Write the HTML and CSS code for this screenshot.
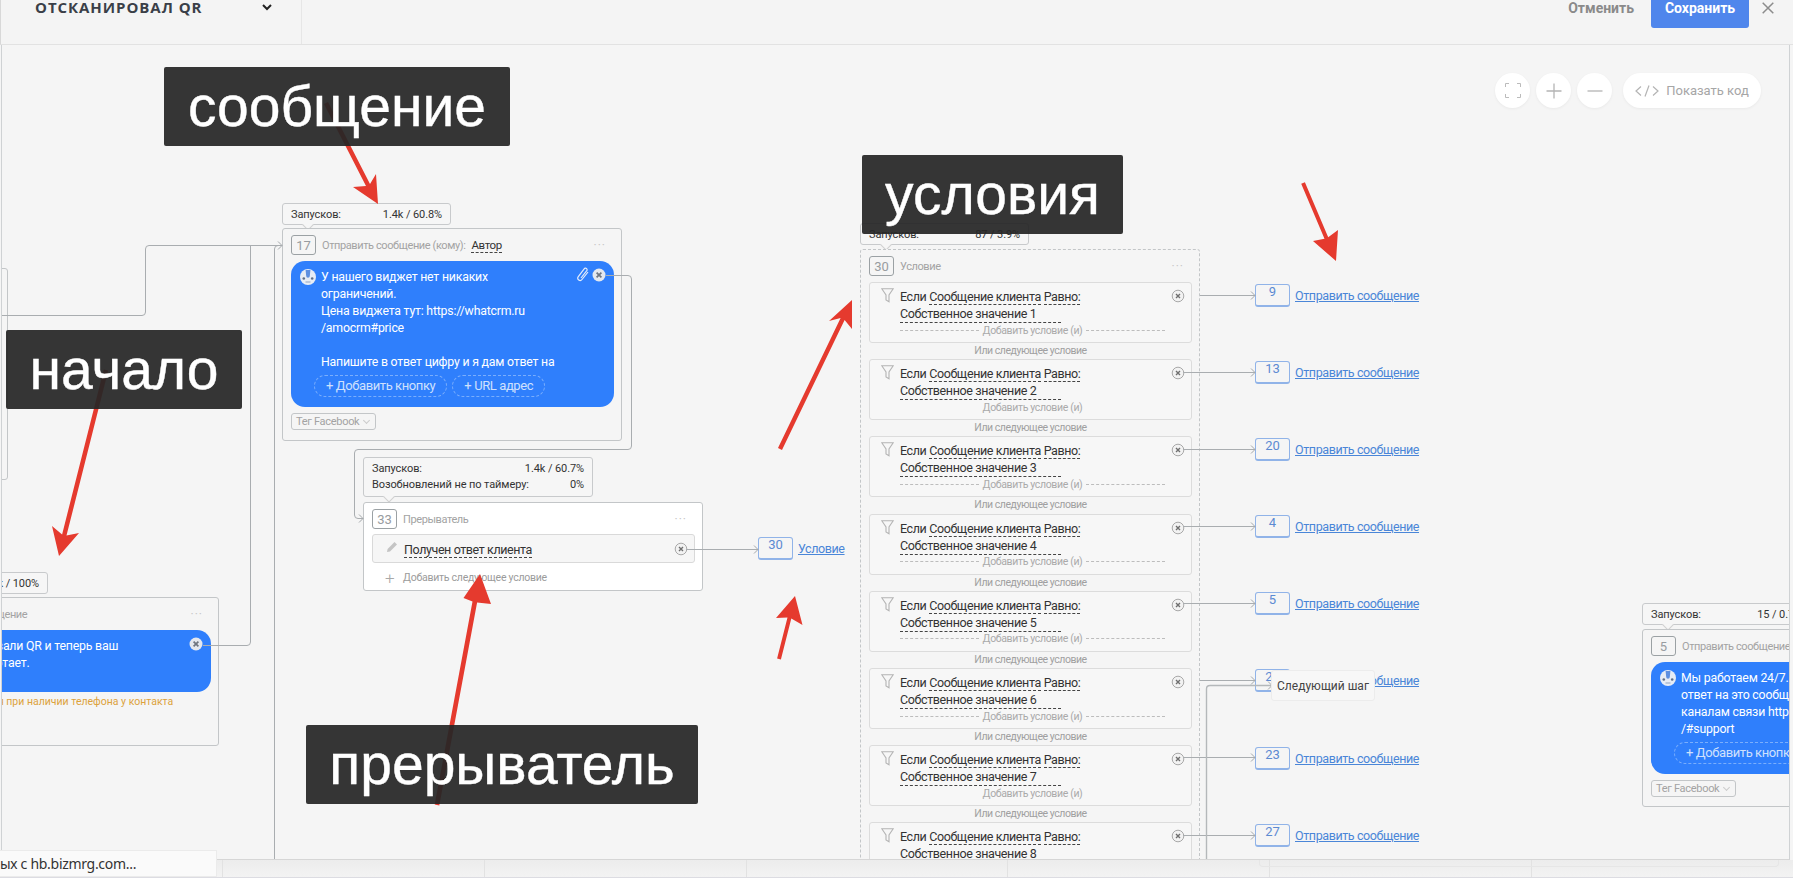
FILE: index.html
```html
<!DOCTYPE html>
<html lang="ru">
<head>
  <meta charset="UTF-8">
  <title>Отсканировал QR</title>
  <link rel="stylesheet" href="styles.css">
</head>
<body>

  <svg class="sprites" width="0" height="0">
    <defs>
      <marker id="tip" markerUnits="userSpaceOnUse" markerWidth="6" markerHeight="10" refX="5" refY="5" orient="auto">
        <path d="M1 1 L5 5 L1 9" fill="none" stroke="#a4a8ab"/>
      </marker>
      <symbol id="ico-avatar" viewBox="0 0 16 16">
        <circle cx="8" cy="8" r="8" fill="#e6ecf5"/>
        <path d="M5.6 1 h4.8 l-.6 6 a1.8 1.8 0 0 1-3.6 0z" fill="#5d8fe0"/>
        <circle cx="3.8" cy="9.5" r="1.3" fill="#5f6f88"/>
        <circle cx="12.2" cy="9.5" r="1.3" fill="#5f6f88"/>
        <path d="M5.5 13 h5" stroke="#9fb0c8" stroke-width="1.2"/>
      </symbol>
      <symbol id="ico-close-w" viewBox="0 0 14 14">
        <circle cx="7" cy="7" r="6.5" fill="#e4e8ee"/>
        <path d="M4.6 4.6 L9.4 9.4 M9.4 4.6 L4.6 9.4" stroke="#6f7680" stroke-width="1.7"/>
      </symbol>
      <symbol id="ico-close" viewBox="0 0 14 14">
        <circle cx="7" cy="7" r="5.8" fill="#f2f2f2" stroke="#a9a9a9"/>
        <path d="M5 5 L9 9 M9 5 L5 9" stroke="#6f6f6f" stroke-width="1.4"/>
      </symbol>
      <symbol id="ico-funnel" viewBox="0 0 13 15">
        <path d="M.8 .8 H12.2 L8 7 V13.8 L5 12 V7 Z" fill="none" stroke="#b4b4b4" stroke-width="1.1"/>
      </symbol>
    </defs>
  </svg>

  <div class="page">
    <header class="topbar">
      <div class="flow-name">
        <span class="flow-title">ОТСКАНИРОВАЛ QR</span>
        <svg class="chevron" width="10" height="7" viewBox="0 0 10 7"><path d="M1 1 L5 5 L9 1" fill="none" stroke="#222" stroke-width="2"/></svg>
      </div>
      <div class="top-actions">
        <a class="btn-cancel">Отменить</a>
        <a class="btn-save">Сохранить</a>
        <svg class="btn-x" width="12" height="12" viewBox="0 0 12 12"><path d="M.7 .7 L11.3 11.3 M11.3 .7 L.7 11.3" stroke="#8c8c8c" stroke-width="1.5"/></svg>
      </div>
    </header>

    <main class="canvas">
      <!-- соединения, координаты как на странице -->
      <svg class="wires" width="1787" height="815" viewBox="2 45 1787 815">
        <g fill="none" stroke="#a9adb0">
          <path d="M2 315.5 H142 Q145.5 315.5 145.5 312 V249 Q145.5 245.5 149 245.5 H282" marker-end="url(#tip)"/>
          <path d="M203 645.5 H247 Q250.5 645.5 250.5 642 V245.5"/>
          <path d="M274.5 860 V249 Q274.5 245.5 278 245.5 H282"/>
          <path d="M606 275.5 H628 Q631.5 275.5 631.5 279 V446 Q631.5 449.5 628 449.5 H358 Q354.5 449.5 354.5 453 V515 Q354.5 518.5 358 518.5 H363" marker-end="url(#tip)"/>
          <path d="M686 549.5 H758" marker-end="url(#tip)"/>
          <path d="M1200 295.5 H1255" marker-end="url(#tip)"/>
          <path d="M1183 372.5 H1255" marker-end="url(#tip)"/>
          <path d="M1183 449.5 H1255" marker-end="url(#tip)"/>
          <path d="M1183 526.5 H1255" marker-end="url(#tip)"/>
          <path d="M1183 603.5 H1255" marker-end="url(#tip)"/>
          <path d="M1200 680.5 H1255" marker-end="url(#tip)"/>
          <path d="M1183 757.5 H1255" marker-end="url(#tip)"/>
          <path d="M1183 835.5 H1255" marker-end="url(#tip)"/>
          <path d="M1206.5 860 V689 Q1206.5 685.5 1210 685.5 H1272" stroke="#b4b8ba" stroke-width="1.4" marker-end="url(#tip)"/>
        </g>
      </svg>

      <div class="node-edge"></div>

      <!-- начало -->
      <div class="stats stats-start"><div class="stat-row"><span>Запусков:</span><span>2.3k / 100%</span></div></div>
      <section class="node node-start">
        <div class="node-head">
          <span class="node-id">1</span>
          <span class="node-title">Отправить сообщение</span>
          <span class="dots">···</span>
        </div>
        <div class="bubble bubble-short">
          <svg class="avatar"><use href="#ico-avatar"/></svg>
          <div class="bubble-text">Вы отсканировали QR и теперь ваш<br>WhatsApp работает.</div>
          <svg class="bubble-close"><use href="#ico-close-w"/></svg>
        </div>
        <div class="warn">Сообщение отправится при наличии телефона у контакта</div>
      </section>

      <!-- сообщение -->
      <div class="stats stats-msg"><div class="stat-row"><span>Запусков:</span><span>1.4k / 60.8%</span></div></div>
      <section class="node node-msg">
        <div class="node-head">
          <span class="node-id">17</span>
          <span class="node-title">Отправить сообщение (кому):</span>
          <span class="dash who">Автор</span>
          <span class="dots">···</span>
        </div>
        <div class="bubble">
          <svg class="avatar"><use href="#ico-avatar"/></svg>
          <div class="bubble-text">У нашего виджет нет никаких<br>ограничений.<br>Цена виджета тут: https://whatcrm.ru<br>/amocrm#price<br><br>Напишите в ответ цифру и я дам ответ на</div>
          <div class="bubble-btns">
            <span class="add-btn">+ Добавить кнопку</span>
            <span class="add-btn">+ URL адрес</span>
          </div>
          <svg class="bubble-clip" width="13" height="15" viewBox="0 0 13 15"><path d="M12 5 L6 12.5 a2.3 2.3 0 0 1-3.7-2.8 L8.2 1.8 a1.6 1.6 0 0 1 2.6 1.9 L5 11" fill="none" stroke="#e4ecfb" stroke-width="1.2"/></svg>
          <svg class="bubble-close"><use href="#ico-close-w"/></svg>
        </div>
        <div class="tag">Тег Facebook <i class="tag-arrow"></i></div>
      </section>

      <!-- прерыватель -->
      <div class="stats stats-break">
        <div class="stat-row"><span>Запусков:</span><span>1.4k / 60.7%</span></div>
        <div class="stat-row"><span>Возобновлений не по таймеру:</span><span>0%</span></div>
      </div>
      <section class="node node-break">
        <div class="node-head">
          <span class="node-id">33</span>
          <span class="node-title">Прерыватель</span>
          <span class="dots">···</span>
        </div>
        <div class="break-row">
          <svg class="pencil" width="12" height="12" viewBox="0 0 12 12"><path d="M1 11 L1.6 8 L8.5 1 L11 3.5 L4 10.4 Z" fill="#c4c4c4"/></svg>
          <span class="dash break-text">Получен ответ клиента</span>
          <svg class="break-close"><use href="#ico-close"/></svg>
        </div>
        <div class="break-add"><span class="break-plus">+</span>Добавить следующее условие</div>
      </section>

      <div class="branch branch-break">
        <span class="target">30</span><a class="step-link">Условие</a>
      </div>

      <!-- условия -->
      <div class="stats stats-cond"><div class="stat-row"><span>Запусков:</span><span>87 / 3.9%</span></div></div>
      <section class="node node-cond">
        <div class="node-head">
          <span class="node-id">30</span>
          <span class="node-title">Условие</span>
          <span class="dots">···</span>
        </div>

        <div class="cond">
          <svg class="funnel"><use href="#ico-funnel"/></svg>
          <div class="cond-body">
            <div class="cond-text">Если <span class="dash">Сообщение клиента</span> <span class="dash">Равно:</span><br><span class="dash value">Собственное значение 1</span></div>
            <div class="cond-add"><span>Добавить условие (и)</span></div>
          </div>
          <svg class="cond-close"><use href="#ico-close"/></svg>
        </div>
        <div class="cond-or">Или следующее условие</div>

        <div class="cond">
          <svg class="funnel"><use href="#ico-funnel"/></svg>
          <div class="cond-body">
            <div class="cond-text">Если <span class="dash">Сообщение клиента</span> <span class="dash">Равно:</span><br><span class="dash value">Собственное значение 2</span></div>
            <div class="cond-add no-lines"><span>Добавить условие (и)</span></div>
          </div>
          <svg class="cond-close"><use href="#ico-close"/></svg>
        </div>
        <div class="cond-or">Или следующее условие</div>

        <div class="cond">
          <svg class="funnel"><use href="#ico-funnel"/></svg>
          <div class="cond-body">
            <div class="cond-text">Если <span class="dash">Сообщение клиента</span> <span class="dash">Равно:</span><br><span class="dash value">Собственное значение 3</span></div>
            <div class="cond-add"><span>Добавить условие (и)</span></div>
          </div>
          <svg class="cond-close"><use href="#ico-close"/></svg>
        </div>
        <div class="cond-or">Или следующее условие</div>

        <div class="cond">
          <svg class="funnel"><use href="#ico-funnel"/></svg>
          <div class="cond-body">
            <div class="cond-text">Если <span class="dash">Сообщение клиента</span> <span class="dash">Равно:</span><br><span class="dash value">Собственное значение 4</span></div>
            <div class="cond-add"><span>Добавить условие (и)</span></div>
          </div>
          <svg class="cond-close"><use href="#ico-close"/></svg>
        </div>
        <div class="cond-or">Или следующее условие</div>

        <div class="cond">
          <svg class="funnel"><use href="#ico-funnel"/></svg>
          <div class="cond-body">
            <div class="cond-text">Если <span class="dash">Сообщение клиента</span> <span class="dash">Равно:</span><br><span class="dash value">Собственное значение 5</span></div>
            <div class="cond-add"><span>Добавить условие (и)</span></div>
          </div>
          <svg class="cond-close"><use href="#ico-close"/></svg>
        </div>
        <div class="cond-or">Или следующее условие</div>

        <div class="cond">
          <svg class="funnel"><use href="#ico-funnel"/></svg>
          <div class="cond-body">
            <div class="cond-text">Если <span class="dash">Сообщение клиента</span> <span class="dash">Равно:</span><br><span class="dash value">Собственное значение 6</span></div>
            <div class="cond-add"><span>Добавить условие (и)</span></div>
          </div>
          <svg class="cond-close"><use href="#ico-close"/></svg>
        </div>
        <div class="cond-or">Или следующее условие</div>

        <div class="cond">
          <svg class="funnel"><use href="#ico-funnel"/></svg>
          <div class="cond-body">
            <div class="cond-text">Если <span class="dash">Сообщение клиента</span> <span class="dash">Равно:</span><br><span class="dash value">Собственное значение 7</span></div>
            <div class="cond-add no-lines"><span>Добавить условие (и)</span></div>
          </div>
          <svg class="cond-close"><use href="#ico-close"/></svg>
        </div>
        <div class="cond-or">Или следующее условие</div>

        <div class="cond">
          <svg class="funnel"><use href="#ico-funnel"/></svg>
          <div class="cond-body">
            <div class="cond-text">Если <span class="dash">Сообщение клиента</span> <span class="dash">Равно:</span><br><span class="dash value">Собственное значение 8</span></div>
            <div class="cond-add"><span>Добавить условие (и)</span></div>
          </div>
          <svg class="cond-close"><use href="#ico-close"/></svg>
        </div>
      </section>

      <div class="branches">
        <div class="branch"><span class="target">9</span><a class="step-link">Отправить сообщение</a></div>
        <div class="branch"><span class="target">13</span><a class="step-link">Отправить сообщение</a></div>
        <div class="branch"><span class="target">20</span><a class="step-link">Отправить сообщение</a></div>
        <div class="branch"><span class="target">4</span><a class="step-link">Отправить сообщение</a></div>
        <div class="branch"><span class="target">5</span><a class="step-link">Отправить сообщение</a></div>
        <div class="branch"><span class="target">21</span><a class="step-link">Отправить сообщение</a></div>
        <div class="branch"><span class="target">23</span><a class="step-link">Отправить сообщение</a></div>
        <div class="branch"><span class="target">27</span><a class="step-link">Отправить сообщение</a></div>
      </div>
      <div class="tooltip">Следующий шаг</div>

      <!-- справа, обрезается краем -->
      <div class="stats stats-right"><div class="stat-row"><span>Запусков:</span><span>15 / 0.7%</span></div></div>
      <section class="node node-right">
        <div class="node-head">
          <span class="node-id">5</span>
          <span class="node-title">Отправить сообщение (кому):</span>
        </div>
        <div class="bubble">
          <svg class="avatar"><use href="#ico-avatar"/></svg>
          <div class="bubble-text">Мы работаем 24/7. Дадим<br>ответ на это сообщение по всем<br>каналам связи https://whatcrm.ru<br>/#support</div>
          <div class="bubble-btns">
            <span class="add-btn">+ Добавить кнопку</span>
          </div>
        </div>
        <div class="tag">Тег Facebook <i class="tag-arrow"></i></div>
      </section>

      <!-- красные стрелки поверх схемы -->
      <svg class="arrows" width="1787" height="815" viewBox="2 45 1787 815">
        <g fill="#e53a2e">
          <path d="M324 104 L328 102 L370 184 L376 174 L378 204 L353 187 L366 186 Z"/>
          <path d="M108.2 370.6 L66.5 535.6 L79 533 L59 556 L52 526 L62.1 534.4 L103.8 369.4 Z"/>
          <path d="M439.3 805.4 L477.1 602.4 L491 604 L480 574 L463.5 598 L472.5 601.6 L434.7 804.6 Z"/>
          <path d="M780.9 659.5 L791.3 618.5 L802.5 625 L795 596 L776 618 L787.5 617.5 L777.1 658.5 Z"/>
          <path d="M782 450 L844.6 320 L852 329 L852 300 L829 321 L840.6 318 L778 448 Z"/>
          <path d="M1304.9 182.2 L1328.2 237.2 L1338 230 L1336 261 L1313 241 L1324.5 238.8 L1301.2 183.8 Z"/>
        </g>
      </svg>

      <!-- подписи -->
      <div class="caption cap-msg">сообщение</div>
      <div class="caption cap-start">начало</div>
      <div class="caption cap-cond">условия</div>
      <div class="caption cap-break">прерыватель</div>

      <!-- управление масштабом -->
      <div class="zoom-tools">
        <a class="round-btn">
          <svg width="16" height="15" viewBox="0 0 16 15"><path d="M.5 4 V.5 H4 M12 .5 H15.5 V4 M15.5 11 V14.5 H12 M4 14.5 H.5 V11" fill="none" stroke="#bbb"/></svg>
        </a>
        <a class="round-btn">
          <svg width="16" height="16" viewBox="0 0 16 16"><path d="M8 .5 V15.5 M.5 8 H15.5" stroke="#b4b4b4" stroke-width="1.3"/></svg>
        </a>
        <a class="round-btn">
          <svg width="16" height="2" viewBox="0 0 16 2"><path d="M.5 1 H15.5" stroke="#b4b4b4" stroke-width="1.3"/></svg>
        </a>
        <a class="code-btn">
          <svg width="24" height="12" viewBox="0 0 24 12"><path d="M6 1.5 L1 6 L6 10.5 M18 1.5 L23 6 L18 10.5 M14 .5 L10 11.5" fill="none" stroke="#b4b4b4" stroke-width="1.2"/></svg>
          Показать код
        </a>
      </div>
    </main>

    <footer class="bottombar">
      <span class="bar-cell cell-a"></span>
      <span class="bar-cell"></span>
      <span class="bar-cell"></span>
      <span class="bar-cell"></span>
      <span class="bar-cell"></span>
      <span class="bar-cell"></span>
      <div class="status-pop">ых с hb.bizmrg.com...</div>
    </footer>
  </div>

</body>
</html>
```

FILE: styles.css
```css
* {
  box-sizing: border-box;
}

body {
  margin: 0;
  background: #f5f5f5;
  font-family: Roboto, 'Noto Sans', sans-serif;
  color: #333;
}

a {
  cursor: pointer;
}

.sprites {
  position: absolute;
}

.page {
  width: 1793px;
  height: 878px;
  display: flex;
  flex-direction: column;
  overflow: hidden;
}

/* верхняя панель */

.topbar {
  height: 45px;
  flex: none;
  display: flex;
  justify-content: space-between;
  border-bottom: 1px solid #e2e2e2;
  border-left: 1px solid #d8d8d8;
  background: #f4f4f4;
}

.flow-name {
  width: 301px;
  height: 44px;
  padding: 0 29px 0 34px;
  display: flex;
  justify-content: space-between;
  border-right: 1px solid #e6e6e6;
}

.flow-title {
  font-family: 'Open Sans', sans-serif;
  font-size: 15px;
  font-weight: 700;
  line-height: 15px;
  letter-spacing: 0.95px;
  color: #3a3f48;
}

.chevron {
  margin-top: 4px;
}

.top-actions {
  display: flex;
  align-items: flex-start;
  padding-right: 19px;
}

.btn-cancel {
  font-size: 14px;
  font-weight: 700;
  line-height: 17px;
  color: #8a8a8a;
}

.btn-save {
  width: 98px;
  height: 28px;
  margin-left: 17px;
  background: #4f86ec;
  border-radius: 0 0 3px 3px;
  color: white;
  font-size: 14px;
  font-weight: 700;
  line-height: 17px;
  text-align: center;
}

.btn-x {
  margin: 2px 0 0 13px;
}

/* холст */

.canvas {
  position: relative;
  flex: 1;
  margin-left: 1px;
  margin-right: 3px;
  border-left: 1px solid #cfd2d4;
  border-right: 1px solid #cfd2d4;
  border-bottom: 1px solid #d6d6d6;
  overflow: hidden;
  background: #f5f5f5;
  font-size: 13px;
}

.wires,
.arrows {
  position: absolute;
  left: 0;
  top: 0;
  pointer-events: none;
}

.wires {
  z-index: 2;
}

.arrows {
  z-index: 3;
}

.node-edge {
  position: absolute;
  left: -20px;
  top: 223px;
  width: 26px;
  height: 212px;
  border: 1px solid #c3c6c8;
  border-radius: 3px;
}

/* узлы */

.node {
  position: absolute;
  width: 340px;
  padding: 6px 7px 10px 8px;
  border: 1px solid #c3c6c8;
  border-radius: 3px;
  background: #f5f5f5;
  z-index: 1;
}

.node-start { left: -123px; top: 552px; height: 149px; }
.node-msg { left: 280px; top: 183px; height: 213px; }
.node-break { left: 361px; top: 457px; height: 89px; background: white; }
.node-cond { left: 858px; top: 204px; height: 640px; border: 1px dashed #c3c6c8; }
.node-right { left: 1640px; top: 584px; height: 178px; }

.node-head {
  display: flex;
  align-items: center;
  height: 20px;
}

.node-id {
  width: 25px;
  height: 20px;
  flex: none;
  border: 1px solid #9ba1a4;
  border-radius: 3px;
  color: #989ca0;
  line-height: 19px;
  text-align: center;
}

.node-title {
  margin-left: 6px;
  font-size: 11px;
  letter-spacing: -0.4px;
  color: #a3a3a3;
  white-space: nowrap;
}

.who {
  margin-left: 6px;
  font-size: 11.5px;
  letter-spacing: -0.4px;
}

.dots {
  margin-left: auto;
  padding-right: 8px;
  font-size: 12px;
  letter-spacing: 1px;
  color: #c8c8c8;
}

.dash {
  border-bottom: 1px dashed #444;
}

/* счётчики */

.stats {
  position: absolute;
  padding: 3px 8px 2px;
  width: 169px;
  border: 1px solid #c8cacc;
  border-radius: 3px;
  background: #f6f6f6;
  font-size: 11px;
  letter-spacing: -0.1px;
  line-height: 15px;
  color: #333;
  z-index: 1;
}

.stats::after {
  content: "";
  position: absolute;
  left: 21px;
  bottom: -5px;
  width: 7px;
  height: 7px;
  border-right: 1px solid #d0d0d0;
  border-bottom: 1px solid #d0d0d0;
  background: #f6f6f6;
  transform: rotate(45deg);
}

.stat-row {
  display: flex;
  justify-content: space-between;
  white-space: nowrap;
}

.stats-start { left: -123px; top: 527px; }
.stats-msg { left: 280px; top: 158px; }
.stats-break { left: 361px; top: 412px; width: 230px; height: 40px; padding-top: 3px; line-height: 16px; }
.stats-cond { left: 858px; top: 178px; }
.stats-right { left: 1640px; top: 558px; }

/* сообщение */

.bubble {
  position: relative;
  margin-top: 6px;
  padding: 8px 8px 10px 30px;
  background: #2f7ffc;
  border-radius: 14px;
  color: white;
  font-size: 12.3px;
  letter-spacing: -0.2px;
  line-height: 17px;
  white-space: nowrap;
}

.bubble-short {
  height: 62px;
}

.avatar {
  position: absolute;
  left: 9px;
  top: 8px;
  width: 16px;
  height: 16px;
}

.bubble-close {
  position: absolute;
  right: 8px;
  top: 7px;
  width: 14px;
  height: 14px;
}

.bubble-clip {
  position: absolute;
  right: 25px;
  top: 6px;
}

.bubble-btns {
  display: flex;
  gap: 5px;
  margin: 4px 0 0 -7px;
}

.add-btn {
  height: 22px;
  padding: 0 11px;
  border: 1px dashed #7aaefc;
  border-radius: 11px;
  color: #cfe1fd;
  font-size: 13px;
  letter-spacing: -0.4px;
  line-height: 20px;
}

.tag {
  display: flex;
  align-items: center;
  justify-content: space-between;
  width: 85px;
  height: 17px;
  margin-top: 6px;
  padding: 0 6px 0 4px;
  border: 1px solid #c3c6c8;
  border-radius: 3px;
  font-size: 11px;
  letter-spacing: -0.3px;
  color: #a3a3a3;
  white-space: nowrap;
}

.tag-arrow {
  width: 5px;
  height: 5px;
  margin-top: -3px;
  border-right: 1px solid #ccc;
  border-bottom: 1px solid #ccc;
  transform: rotate(45deg);
}

.warn {
  margin-top: 3px;
  font-size: 10.5px;
  line-height: 14px;
  color: #dca23c;
  white-space: nowrap;
}

/* прерыватель */

.break-row {
  display: flex;
  align-items: center;
  height: 29px;
  margin-top: 5px;
  padding: 0 6px 0 13px;
  border: 1px solid #d9d9d9;
  border-radius: 3px;
  background: #f6f6f6;
  font-size: 12.5px;
  letter-spacing: -0.4px;
}

.pencil {
  margin-right: 6px;
  margin-top: -3px;
}

.break-text {
  margin-top: 2px;
}

.break-close {
  width: 14px;
  height: 14px;
  margin-left: auto;
}

.break-add {
  display: flex;
  align-items: center;
  height: 29px;
  padding-left: 13px;
  font-size: 10.5px;
  letter-spacing: -0.25px;
  color: #9b9b9b;
}

.break-plus {
  width: 18px;
  font-size: 17px;
  font-weight: 300;
  color: #a8a8a8;
}

/* условия */

.cond {
  display: flex;
  height: 61px;
  margin-top: 6px;
  padding: 5px 5px 0 11px;
  border: 1px solid #dcdcdc;
  border-radius: 3px;
  background: #f7f7f7;
}

.funnel {
  width: 13px;
  height: 15px;
  flex: none;
  margin: 0 6px 0 0;
}

.cond-body {
  width: 265px;
}

.cond-text {
  font-size: 12.5px;
  letter-spacing: -0.38px;
  line-height: 17px;
  white-space: nowrap;
}

.value {
  display: inline-block;
  width: 161px;
  line-height: 16px;
}

.cond-add {
  display: flex;
  align-items: center;
  gap: 4px;
  height: 14px;
  font-size: 10.5px;
  letter-spacing: -0.35px;
  color: #aaa;
  white-space: nowrap;
}

.cond-add::before,
.cond-add::after {
  content: "";
  flex: 1;
  border-top: 1px dashed #bdbdbd;
}

.cond-add.no-lines::before,
.cond-add.no-lines::after {
  border-top: none;
}

.cond-close {
  width: 14px;
  height: 14px;
  margin: 1px 0 0 6px;
}

.cond-or {
  height: 16px;
  margin-bottom: -5.8px;
  font-size: 10.5px;
  letter-spacing: -0.45px;
  line-height: 15px;
  color: #a0a0a0;
  text-align: center;
}

/* переходы */

.branches {
  position: absolute;
  left: 1253px;
  top: 239px;
  display: flex;
  flex-direction: column;
  gap: 55.2px;
}

.branch {
  display: flex;
  align-items: center;
  gap: 5px;
  height: 22px;
}

.branch-break {
  position: absolute;
  left: 756px;
  top: 492px;
}

.target {
  width: 35px;
  height: 23px;
  border: 1px solid #90b3e8;
  border-bottom-width: 2px;
  border-radius: 3px;
  color: #5c8ad2;
  line-height: 14px;
  text-align: center;
  background: #f5f5f5;
  position: relative;
}

.step-link {
  color: #4a86d8;
  font-size: 12.5px;
  letter-spacing: -0.4px;
  text-decoration: underline;
  white-space: nowrap;
}

.tooltip {
  position: absolute;
  left: 1269px;
  top: 625px;
  width: 104px;
  height: 31px;
  border: 1px solid #ececec;
  border-radius: 3px;
  background: #f7f7f7;
  color: #444;
  font-size: 12px;
  line-height: 30px;
  text-align: center;
  white-space: nowrap;
  z-index: 2;
}

/* чёрные подписи */

.caption {
  position: absolute;
  height: 79px;
  border-radius: 2px;
  background: rgba(38, 38, 38, 0.93);
  color: white;
  font-family: 'Liberation Sans', Arial, sans-serif;
  font-size: 57px;
  -webkit-text-stroke: 0.4px white;
  line-height: 79px;
  text-align: center;
  z-index: 4;
}

.cap-msg { left: 162px; top: 22px; width: 346px; }
.cap-start { left: 4px; top: 285px; width: 236px; }
.cap-cond { left: 860px; top: 110px; width: 261px; }
.cap-break { left: 304px; top: 680px; width: 392px; }

/* кнопки масштаба */

.zoom-tools {
  position: absolute;
  left: 1493px;
  top: 28px;
  display: flex;
  align-items: center;
  gap: 6px;
}

.round-btn {
  width: 35px;
  height: 35px;
  display: flex;
  align-items: center;
  justify-content: center;
  border-radius: 50%;
  background: white;
  box-shadow: 0 1px 3px rgba(0, 0, 0, 0.05);
}

.code-btn {
  width: 138px;
  height: 35px;
  margin-left: 5px;
  display: flex;
  align-items: center;
  justify-content: center;
  gap: 7px;
  border-radius: 18px;
  background: white;
  box-shadow: 0 1px 3px rgba(0, 0, 0, 0.05);
  color: #a6a6a6;
  font-size: 13px;
}

/* нижняя полоса */

.bottombar {
  position: relative;
  height: 18px;
  flex: none;
  display: flex;
  padding-left: 222px;
  background: linear-gradient(#ececec, #f3f3f3);
  border-bottom: 1px solid #dcdce2;
}

.bottombar::after {
  content: "";
  position: absolute;
  left: 1259px;
  top: 0;
  width: 518px;
  height: 6px;
  border: 1px solid #e6e6e6;
  border-top: none;
  border-radius: 0 0 4px 4px;
}

.bar-cell {
  width: 345px;
  border-left: 1px solid #e2e2e2;
}

.status-pop {
  position: absolute;
  left: 0;
  bottom: 0;
  width: 217px;
  height: 27px;
  background: #fafafa;
  border: 1px solid #ebebeb;
  border-left: none;
  font-family: 'Noto Sans', sans-serif;
  font-size: 14px;
  letter-spacing: -0.3px;
  line-height: 25px;
  color: #333;
  white-space: nowrap;
}
```
